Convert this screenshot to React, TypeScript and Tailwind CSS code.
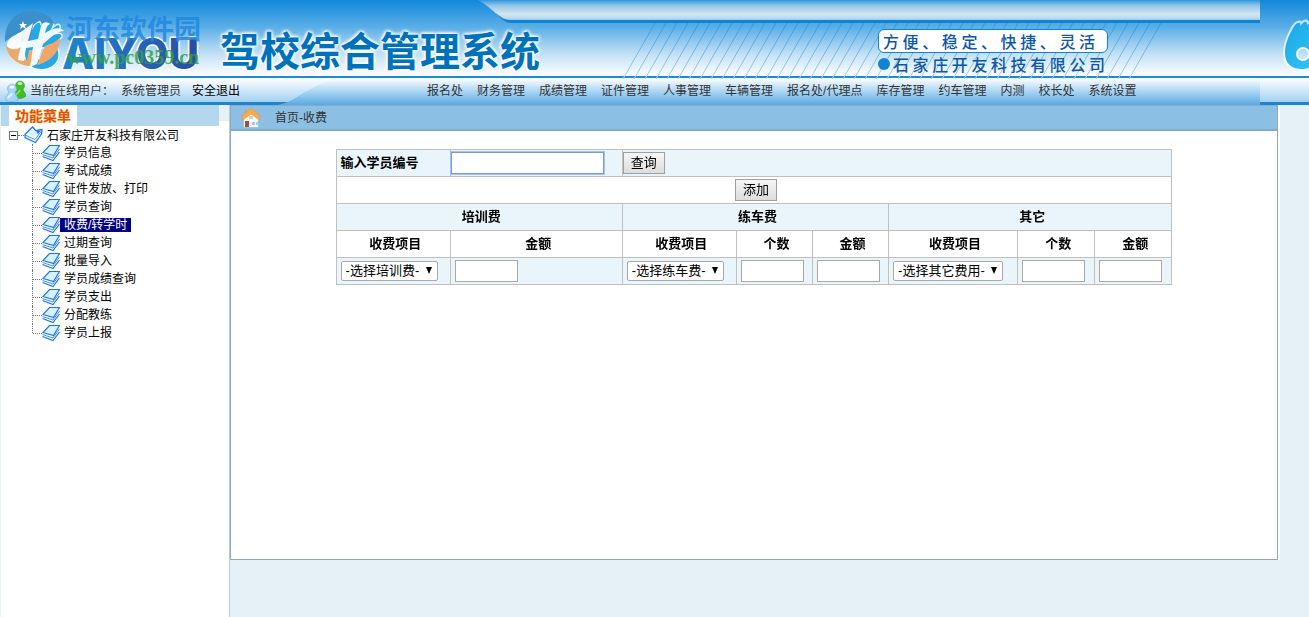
import clsx from 'clsx';

const navItems = [
    '报名处',
    '财务管理',
    '成绩管理',
    '证件管理',
    '人事管理',
    '车辆管理',
    '报名处/代理点',
    '库存管理',
    '约车管理',
    '内测',
    '校长处',
    '系统设置',
];

const menuItems = [
    '学员信息',
    '考试成绩',
    '证件发放、打印',
    '学员查询',
    '收费/转学时',
    '过期查询',
    '批量导入',
    '学员成绩查询',
    '学员支出',
    '分配教练',
    '学员上报',
];

const activeItem = '收费/转学时';

function HandShape() {
    return (
        <path
            fillRule="evenodd"
            d="M42 69C31 69 25 63 25 53C25 45 28 37 32 30C34 26 36 23 38 23C40 22 41 23 40 26L44 22C46 21 48 22 47 25L50 23C53 21 54 24 52 27L50 31L56 26C59 24 61 26 58 30L54 35C58 33 63 34 61 37C59 39 56 41 55 44C58 49 59 53 58 58C56 65 49 69 42 69ZM43 61A7 7 0 1 0 43 47A7 7 0 1 0 43 61Z"
        />
    );
}

function HeaderBackdrop() {
    return (
        <div className="absolute inset-0 flex overflow-hidden" aria-hidden="true">
            <svg width="1260" height="105" className="shrink-0">
                <defs>
                    <linearGradient id="sky" x1="0" y1="0" x2="0" y2="1">
                        <stop offset="0" stopColor="#1289db" />
                        <stop offset=".35" stopColor="#5aaee6" />
                        <stop offset=".7" stopColor="#c2e0f5" />
                        <stop offset="1" stopColor="#ffffff" />
                    </linearGradient>
                    <linearGradient id="strip" x1="0" y1="0" x2="0" y2="1">
                        <stop offset="0" stopColor="#2f97de" />
                        <stop offset=".25" stopColor="#8fc3e8" />
                        <stop offset=".65" stopColor="#d3e5f1" />
                        <stop offset=".85" stopColor="#bedcf1" />
                        <stop offset="1" stopColor="#84c1ec" />
                    </linearGradient>
                    <linearGradient id="bar" x1="0" y1="0" x2="0" y2="1">
                        <stop offset="0" stopColor="#ffffff" />
                        <stop offset="1" stopColor="#55aae5" />
                    </linearGradient>
                    <linearGradient id="barLeft" x1="0" y1="0" x2="0" y2="1">
                        <stop offset="0" stopColor="#ffffff" />
                        <stop offset="1" stopColor="#a3d1f1" />
                    </linearGradient>
                    <linearGradient id="stripes" x1="0" y1="23" x2="0" y2="79" gradientUnits="userSpaceOnUse">
                        <stop offset="0" stopColor="#2f97dc" />
                        <stop offset="1" stopColor="#a5d3f0" />
                    </linearGradient>
                </defs>
                <rect width="1260" height="77" fill="url(#sky)" />
                <path d="M478 0H1260V21H512C500 21 498 12 478 0Z" fill="url(#strip)" />
                <path d="M496 13C503 19 505 20 512 20H1260V23H512C504 23 501 18 496 13Z" fill="#0d84d4" />
                <rect y="76" width="1260" height="2" fill="#1c8cd8" />
                <rect y="78" width="1260" height="27" fill="url(#bar)" />
                <path d="M0 78H340C318 82 300 96 288 102H0Z" fill="url(#barLeft)" />
                <path d="M0 102H288C282 104 280 105 276 105H0Z" fill="#1488d8" />
                <g stroke="url(#stripes)" strokeWidth="1">
                    {Array.from({ length: 47 }, (_, i) => (
                        <line key={i} x1={655 + i * 11} y1="23" x2={623 + i * 11} y2="79" />
                    ))}
                </g>
            </svg>
            <svg height="105" className="flex-1">
                <defs>
                    <linearGradient id="handFill" x1="0" y1="0" x2="1" y2="1">
                        <stop offset="0" stopColor="#1aa5e8" />
                        <stop offset="1" stopColor="#35c9f3" />
                    </linearGradient>
                </defs>
                <rect width="100%" height="77" fill="url(#sky)" />
                <rect y="76" width="100%" height="2" fill="#1c8cd8" />
                <rect y="78" width="100%" height="24" fill="url(#barLeft)" />
                <rect y="102" width="100%" height="3" fill="#1488d8" />
                <g fill="url(#handFill)" stroke="#ffffff" strokeWidth="4" strokeOpacity=".7" paintOrder="stroke">
                    <HandShape />
                </g>
            </svg>
        </div>
    );
}

function Logo() {
    return (
        <svg width="206" height="76" className="shrink-0">
            <defs>
                <linearGradient id="word" x1="0" y1="0" x2="1" y2="0">
                    <stop offset="0" stopColor="#1c87cf" />
                    <stop offset="1" stopColor="#2b4ba5" />
                </linearGradient>
            </defs>
            <g fill="#25a9e6" stroke="#ffffff" strokeWidth="3" strokeOpacity=".8" paintOrder="stroke">
                <HandShape />
            </g>
            <text
                x="62"
                y="69"
                className="font-['Inter',sans-serif] text-[42px] font-extrabold"
                fill="url(#word)"
                stroke="#ffffff"
                strokeWidth="3"
                strokeLinejoin="round"
                paintOrder="stroke"
            >
                AIYOU
            </text>
            <path d="M5 42C4 24 15 11 31 11C42 11 51 16 55 24C50 22 46 23 43 26L40 20L33 25L30 41L20 42L23 31C16 36 9 38 5 42Z" fill="#3b8fca" />
            <path d="M6 46C8 58 19 66 31 66L34 50L29 50L27 60L18 58L20 48C14 50 9 48 6 46Z" fill="#eda76a" />
            <path d="M37 65C53 61 60 50 60 38C55 43 49 44 45 46Z" fill="#eda76a" />
            <path
                d="M7 46C7 36 18 35 25 29L33 23L28 41L38 39L41 26C43 21 48 22 50 24C46 26 46 30 45 33C54 27 61 27 64 31C57 31 50 38 43 44L37 64L30 67L33 47L26 48L24 61L18 60L21 47C16 50 10 50 7 46Z"
                fill="#ffffff"
                fillOpacity=".92"
            />
            <path d="M23 21L24 24L27 24L25 26L26 29L23 27L20 29L21 26L19 24L22 24Z" fill="#ffffff" />
            <text x="66" y="39" className="font-['Noto_Sans_CJK_SC',sans-serif] text-[27px] font-bold" fill="#2288e0" fillOpacity=".85">
                河东软件园
            </text>
            <text x="67" y="64" className="font-['Liberation_Serif',serif] text-[20px] font-bold" fill="#35a045" fillOpacity=".85">
                www.pc0359.cn
            </text>
        </svg>
    );
}

function UsersIcon() {
    return (
        <svg width="21" height="22" viewBox="0 0 21 22" className="shrink-0" aria-hidden="true">
            <path d="M9 17C9 13 11 12 12 9A4.500 4.500 0 1 1 18 9C18 12 21 13 21 16C18 19 12 19 9 17Z" fill="#3fbf25" stroke="#2a9a1c" strokeWidth=".6" />
            <ellipse cx="15" cy="3.500" rx="2.500" ry="1.500" fill="#c6f7a8" />
            <path d="M11 15C12 13 14 13 15 10" fill="none" stroke="#8fe66c" strokeWidth="1.500" />
            <path d="M0 20C0 16 3 15 4 12A4.500 4.500 0 1 1 10 12C10 15 13 16 13 20C9 22 4 22 0 20Z" fill="#a9d5fa" stroke="#6eaee6" strokeWidth=".6" />
            <ellipse cx="7" cy="7" rx="2.500" ry="1.500" fill="#ffffff" />
            <path d="M3 18C4 16 6 16 7 13" fill="none" stroke="#e6f4ff" strokeWidth="2" />
        </svg>
    );
}

function HomeIcon() {
    return (
        <svg width="20" height="22" viewBox="0 0 20 22" className="shrink-0" aria-hidden="true">
            <path d="M3 11L10 4L17 11V20H3Z" fill="#fbfbfd" stroke="#d9dde6" strokeWidth=".5" />
            <path d="M4 3H6V7L4 9Z" fill="#f29a3a" />
            <path d="M10 1L19 9V13L17 12L10 7L3 12L1 13V9Z" fill="#f9ab4b" stroke="#ef9435" strokeWidth=".6" />
            <rect x="4" y="14" width="4" height="6" fill="#9b5433" />
            <rect x="11" y="15" width="3" height="3" fill="#a9cbe8" />
            <rect x="15" y="15" width="2" height="3" fill="#a9cbe8" />
            <rect x="8" y="9" width="4" height="3" fill="#b9d4ea" />
        </svg>
    );
}

function BookIcon() {
    return (
        <svg width="18" height="18" viewBox="0 0 18 18" className="shrink-0" aria-hidden="true">
            <path d="M1 9L0.500 12.500L11 16.500L17.500 8V2Z" fill="#ffffff" />
            <path d="M0.500 12.500L11 16.500L17.500 8" fill="none" stroke="#1473ff" strokeWidth="1.200" />
            <path d="M0.500 10.500L11 14L17.500 5" fill="none" stroke="#1473ff" strokeWidth=".8" />
            <path d="M7.500 1.500H17.500L11.500 11.500L1 8.500Z" fill="#d9f1fc" stroke="#1473ff" strokeWidth="1.200" />
        </svg>
    );
}

function OpenBookIcon() {
    return (
        <svg width="19" height="18" viewBox="0 0 19 18" className="shrink-0" aria-hidden="true">
            <path d="M1 8.500L8.500 1L11.500 4.500L18 3.500L17.500 8L11.500 16.500L1 11.500Z" fill="#ffffff" stroke="#1473ff" strokeWidth="1.200" />
            <path d="M1 9L11 13.500L17.500 5" fill="none" stroke="#1473ff" strokeWidth=".8" />
            <path d="M8 3L4 8L10 11L15 6L11 6Z" fill="#d9f1fc" />
            <path d="M12 5L14 8L17 4Z" fill="#1473ff" />
        </svg>
    );
}

function Sidebar() {
    return (
        <aside className="w-[230px] shrink-0 border-r border-l border-r-[#bccdd9] border-l-[#e5f1f7] bg-white">
            <div className="flex h-[21px]">
                <div className="w-2 bg-[#b5d7ec]" />
                <h2 className="px-[6px] text-sm/[22px] font-bold text-[#e65100] [text-shadow:0_0_2px_#ffd98a]">功能菜单</h2>
                <div className="flex-1 bg-[#b5d7ec]" />
                <div className="h-4 w-[10px] bg-[#e5f1f7]" />
            </div>
            <div className="pl-2 text-xs/[18px]">
                <div className="flex h-[18px] items-center">
                    <button type="button" aria-label="收起" className="flex size-[9px] items-center justify-center border border-gray-500 bg-white">
                        <span className="h-px w-[5px] bg-black" />
                    </button>
                    <span className="w-[6px] border-t border-dotted border-gray-500" />
                    <OpenBookIcon />
                    <a href="#company" className="ml-1 pt-px">
                        石家庄开友科技有限公司
                    </a>
                </div>
                <ul className="pl-[23px]">
                    {menuItems.map((item) => (
                        <li key={item} className="group flex h-[18px] items-center">
                            <span className="h-[18px] border-l border-dotted border-gray-500 group-last:h-[9px] group-last:self-start" />
                            <span className="w-[9px] border-t border-dotted border-gray-500" />
                            <BookIcon />
                            <a href="#menu" className={clsx('px-1 leading-[14px]', item === activeItem && 'bg-[#000080] text-white')}>
                                {item}
                            </a>
                        </li>
                    ))}
                </ul>
            </div>
        </aside>
    );
}

function FeeSelect({ label, placeholder, wide }: { label: string; placeholder: string; wide?: boolean }) {
    return (
        <div className={clsx('relative', wide ? 'w-[110px]' : 'w-[97px]')}>
            <select
                aria-label={label}
                className="block h-5 w-full appearance-none rounded-xs border border-[#a9a9a9] bg-white pl-1 text-[13px]/[18px]"
            >
                <option>{placeholder}</option>
            </select>
            <svg width="8" height="8" viewBox="0 0 8 8" className="pointer-events-none absolute top-[6px] right-[5px]" aria-hidden="true">
                <path d="M1 0H7L4 7Z" />
            </svg>
        </div>
    );
}

function AmountInput({ label }: { label: string }) {
    return <input type="text" aria-label={label} className="block h-[22px] w-[63px] border border-[#a9a9a9] bg-white px-px" />;
}

const buttonClass = 'h-[22px] border border-[#a0a0a0] bg-linear-to-b from-[#f6f6f6] to-[#dddddd] px-[7px] text-[13px]/[20px]';
const cell = 'h-[27px] border border-[#c0c0c0]';

function FeeTable() {
    return (
        <table className="mx-auto w-4/5 table-fixed border-collapse text-[13px]/[20px]">
            <colgroup>
                <col className="w-[114px]" />
                <col className="w-[172px]" />
                <col className="w-[114px]" />
                <col className="w-[76px]" />
                <col className="w-[76px]" />
                <col className="w-[129px]" />
                <col className="w-[77px]" />
                <col className="w-[77px]" />
            </colgroup>
            <tbody>
                <tr className="bg-[#eaf5fb]">
                    <th className={clsx(cell, 'pl-1 text-left')}>
                        <label htmlFor="student-no">输入学员编号</label>
                    </th>
                    <td className={cell}>
                        <input
                            id="student-no"
                            type="text"
                            autoFocus
                            className="block h-[22px] w-[153px] border border-[#6f9de0] bg-white px-px outline-1 outline-[#a3c4f3]"
                        />
                    </td>
                    <td colSpan={6} className={cell}>
                        <button type="button" className={clsx(buttonClass, 'block')}>
                            查询
                        </button>
                    </td>
                </tr>
                <tr>
                    <td colSpan={8} className={clsx(cell, 'pl-1')}>
                        <button type="button" className={clsx(buttonClass, 'mx-auto block')}>
                            添加
                        </button>
                    </td>
                </tr>
                <tr className="bg-[#eaf5fb]">
                    <th colSpan={2} className={clsx(cell, 'pl-1')}>
                        培训费
                    </th>
                    <th colSpan={3} className={clsx(cell, 'pl-1')}>
                        练车费
                    </th>
                    <th colSpan={3} className={clsx(cell, 'pl-1')}>
                        其它
                    </th>
                </tr>
                <tr>
                    {['收费项目', '金额', '收费项目', '个数', '金额', '收费项目', '个数', '金额'].map((title, i) => (
                        <th key={i} className={clsx(cell, 'pl-1')}>
                            {title}
                        </th>
                    ))}
                </tr>
                <tr className="bg-[#eaf5fb]">
                    <td className={clsx(cell, 'pl-1')}>
                        <FeeSelect label="培训费项目" placeholder="-选择培训费-" />
                    </td>
                    <td className={clsx(cell, 'pl-1')}>
                        <AmountInput label="培训费金额" />
                    </td>
                    <td className={clsx(cell, 'pl-1')}>
                        <FeeSelect label="练车费项目" placeholder="-选择练车费-" />
                    </td>
                    <td className={clsx(cell, 'pl-1')}>
                        <AmountInput label="练车费个数" />
                    </td>
                    <td className={clsx(cell, 'pl-1')}>
                        <AmountInput label="练车费金额" />
                    </td>
                    <td className={clsx(cell, 'pl-1')}>
                        <FeeSelect label="其它费用项目" placeholder="-选择其它费用-" wide />
                    </td>
                    <td className={clsx(cell, 'pl-1')}>
                        <AmountInput label="其它费用个数" />
                    </td>
                    <td className={clsx(cell, 'pl-1')}>
                        <AmountInput label="其它费用金额" />
                    </td>
                </tr>
            </tbody>
        </table>
    );
}

export default function App() {
    return (
        <div className="flex min-h-screen flex-col bg-[#e5f1f7] font-['Liberation_Sans','Noto_Sans_CJK_SC',sans-serif] text-xs text-black">
            <header className="relative">
                <HeaderBackdrop />
                <div className="relative flex h-[76px] items-center">
                    <Logo />
                    <h1 className="ml-[14px] pt-7 text-[40px]/[48px] font-bold whitespace-nowrap text-[#0072bc] [text-shadow:0_0_3px_#fff,0_0_3px_#fff,0_0_4px_#fff,0_0_4px_#fff]">
                        驾校综合管理系统
                    </h1>
                    <div className="ml-[338px] pt-[27px] font-['Noto_Sans_CJK_SC',sans-serif] text-base/[22px] font-medium whitespace-pre text-[#0d57a8]">
                        <p className="rounded-md border border-[#0d84d4] bg-white pr-3 pl-1">方 便 、 稳 定 、 快 捷 、 灵 活</p>
                        <p className="flex items-center gap-[3px]">
                            <span className="size-3 rounded-full bg-[#0d84d4]" />
                            石 家 庄 开 友 科 技 有 限 公 司
                        </p>
                    </div>
                </div>
                <div className="relative flex h-[29px] items-center whitespace-nowrap">
                    <div className="flex w-[427px] shrink-0 items-center pl-[5px] text-[#333]">
                        <UsersIcon />
                        <span className="ml-1">当前在线用户：</span>
                        <span className="ml-[7px]">系统管理员</span>
                        <a href="#logout" className="ml-[11px] text-black">
                            安全退出
                        </a>
                    </div>
                    <nav className="flex gap-[14px] text-[#333]">
                        {navItems.map((item) => (
                            <a key={item} href="#nav">
                                {item}
                            </a>
                        ))}
                    </nav>
                </div>
            </header>
            <div className="flex flex-1">
                <Sidebar />
                <div className="mr-[29px] flex-1 self-start bg-white pr-[2px]">
                    <main className="border border-[#8fa9ba]">
                        <div className="flex h-[25px] items-center border-b-2 border-[#7fabcd] bg-[#8bbfe3] pl-[10px] text-[#333]">
                            <HomeIcon />
                            <span className="ml-[14px]">首页-收费</span>
                        </div>
                        <div className="min-h-[428px] pt-[18px]">
                            <FeeTable />
                        </div>
                    </main>
                </div>
            </div>
        </div>
    );
}
